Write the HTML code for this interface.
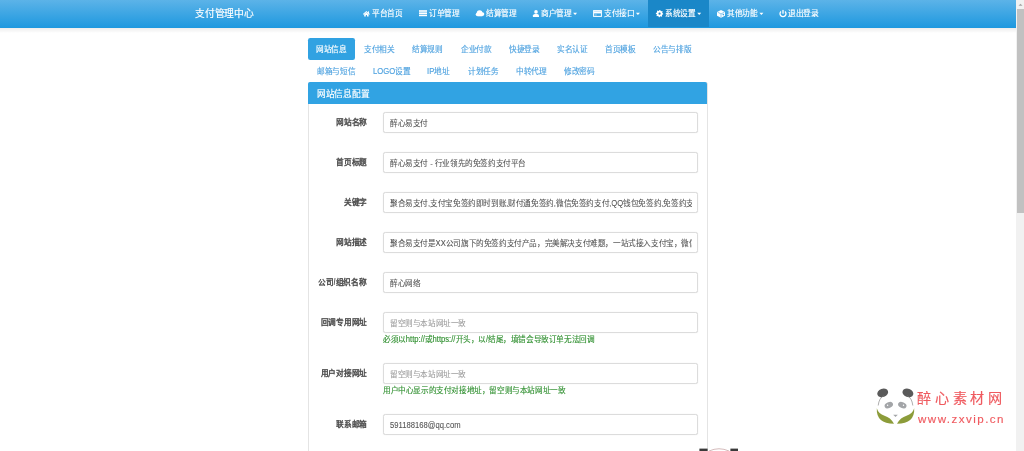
<!DOCTYPE html><html lang="zh-CN"><head><meta charset="utf-8"><style>
*{box-sizing:border-box;margin:0;padding:0}
html,body{width:1024px;height:451px;overflow:hidden;background:#fff;font-family:"Liberation Sans",sans-serif}
#wrap{position:absolute;left:0;top:0;width:1024px;height:451px;background:#fff;}
.L{display:inline-block;transform:scaleY(1.25);transform-origin:0 70%}
.t{position:absolute;white-space:nowrap;transform-origin:0 0;transform:scale(0.1);will-change:transform;-webkit-text-stroke:1.5px currentColor}
#nav{position:absolute;left:0;top:0;width:1016px;height:27.6px;background:linear-gradient(#5cb3e8,#1d98df)}
#navsh{position:absolute;left:0;top:27.6px;width:1016px;height:5px;background:linear-gradient(rgba(0,0,0,.075),rgba(0,0,0,0))}
#active{position:absolute;left:648px;top:0;width:61.3px;height:27.2px;background:#1a87c8}
#pact{position:absolute;left:308px;top:38px;width:47px;height:22px;background:#31a2e2;border-radius:2.2px}
#panel{position:absolute;left:308px;top:82.3px;width:400px;height:400px;border:1px solid #e4e4e4;border-radius:2px}
#ph{position:absolute;left:308px;top:82.3px;width:399.4px;height:21.4px;background:#31a3e3;border-radius:2px 2px 0 0}
.in{position:absolute;left:383px;width:315px;height:21px;border:1px solid #dcdcdc;border-radius:2.5px;background:#fff;box-shadow:0 0 1px rgba(0,0,0,.15)}
.clip{position:absolute;left:389px;width:302.6px;height:14px;overflow:hidden}
#sb{position:absolute;left:1015.5px;top:0;width:8.5px;height:451px;background:#f1f1f1}
#thumb{position:absolute;left:1016.8px;top:9.3px;width:7.2px;height:203.3px;background:#c1c1c1}
</style></head><body><div id="wrap">
<div id="nav"></div><div id="navsh"></div><div id="active"></div>
<div class="t" style="left:195px;top:6.5px;font-size:98.0px;line-height:130.0px;color:#fff;">支付管理中心</div>
<div class="t" style="left:372.3px;top:8px;font-size:77.0px;line-height:110.0px;color:#fff;">平台首页</div>
<div class="t" style="left:429.1px;top:8px;font-size:77.0px;line-height:110.0px;color:#fff;">订单管理</div>
<div class="t" style="left:486px;top:8px;font-size:77.0px;line-height:110.0px;color:#fff;">结算管理</div>
<div class="t" style="left:541px;top:8px;font-size:77.0px;line-height:110.0px;color:#fff;">商户管理</div>
<div class="t" style="left:603.5px;top:8px;font-size:77.0px;line-height:110.0px;color:#fff;">支付接口</div>
<div class="t" style="left:664.8px;top:8px;font-size:77.0px;line-height:110.0px;color:#fff;">系统设置</div>
<div class="t" style="left:727.3px;top:8px;font-size:77.0px;line-height:110.0px;color:#fff;">其他功能</div>
<div class="t" style="left:788.2px;top:8px;font-size:77.0px;line-height:110.0px;color:#fff;">退出登录</div>
<div id="pact"></div>
<div class="t" style="left:315.6px;top:43.5px;font-size:77.0px;line-height:110.0px;color:#fff;">网站信息</div>
<div class="t" style="left:364px;top:43.5px;font-size:77.0px;line-height:110.0px;color:#52a4e0;">支付相关</div>
<div class="t" style="left:411.7px;top:43.5px;font-size:77.0px;line-height:110.0px;color:#52a4e0;">结算规则</div>
<div class="t" style="left:460.6px;top:43.5px;font-size:77.0px;line-height:110.0px;color:#52a4e0;">企业付款</div>
<div class="t" style="left:508.75px;top:43.5px;font-size:77.0px;line-height:110.0px;color:#52a4e0;">快捷登录</div>
<div class="t" style="left:557px;top:43.5px;font-size:77.0px;line-height:110.0px;color:#52a4e0;">实名认证</div>
<div class="t" style="left:605.2px;top:43.5px;font-size:77.0px;line-height:110.0px;color:#52a4e0;">首页模板</div>
<div class="t" style="left:652.7px;top:43.5px;font-size:77.0px;line-height:110.0px;color:#52a4e0;">公告与排版</div>
<div class="t" style="left:317.2px;top:65.5px;font-size:77.0px;line-height:110.0px;color:#52a4e0;">邮箱与短信</div>
<div class="t" style="left:372.7px;top:65.5px;font-size:77.0px;line-height:110.0px;color:#52a4e0;"><span class="L">LOGO</span>设置</div>
<div class="t" style="left:427.3px;top:65.5px;font-size:77.0px;line-height:110.0px;color:#52a4e0;"><span class="L">IP</span>地址</div>
<div class="t" style="left:468.1px;top:65.5px;font-size:77.0px;line-height:110.0px;color:#52a4e0;">计划任务</div>
<div class="t" style="left:516.25px;top:65.5px;font-size:77.0px;line-height:110.0px;color:#52a4e0;">中转代理</div>
<div class="t" style="left:564.2px;top:65.5px;font-size:77.0px;line-height:110.0px;color:#52a4e0;">修改密码</div>
<div id="panel"></div><div id="ph"></div>
<div class="t" style="left:316.7px;top:88px;font-size:87.4px;line-height:120.0px;color:#fff;">网站信息配置</div>
<div class="t" style="right:657.3px;transform-origin:100% 0;top:117.3px;font-size:77.0px;line-height:110.0px;color:#505050;font-weight:bold;-webkit-text-stroke-width:0.6px;">网站名称</div>
<div class="in" style="top:112px"></div>
<div class="clip" style="top:116.2px"><div class="t" style="left:1px;top:1.5px;font-size:76.5px;line-height:110.0px;color:#555;-webkit-text-stroke-width:0.8px;">醉心易支付</div></div>
<div class="t" style="right:657.3px;transform-origin:100% 0;top:157.3px;font-size:77.0px;line-height:110.0px;color:#505050;font-weight:bold;-webkit-text-stroke-width:0.6px;">首页标题</div>
<div class="in" style="top:152px"></div>
<div class="clip" style="top:156.2px"><div class="t" style="left:1px;top:1.5px;font-size:76.5px;line-height:110.0px;color:#555;-webkit-text-stroke-width:0.8px;">醉心易支付 - 行业领先的免签约支付平台</div></div>
<div class="t" style="right:657.3px;transform-origin:100% 0;top:197.3px;font-size:77.0px;line-height:110.0px;color:#505050;font-weight:bold;-webkit-text-stroke-width:0.6px;">关键字</div>
<div class="in" style="top:192px"></div>
<div class="clip" style="top:196.2px"><div class="t" style="left:1px;top:1.5px;font-size:76.5px;line-height:110.0px;color:#555;-webkit-text-stroke-width:0.8px;">聚合易支付,支付宝免签约即时到账,财付通免签约,微信免签约支付,<span class="L">QQ</span>钱包免签约,免签约支付</div></div>
<div class="t" style="right:657.3px;transform-origin:100% 0;top:237.3px;font-size:77.0px;line-height:110.0px;color:#505050;font-weight:bold;-webkit-text-stroke-width:0.6px;">网站描述</div>
<div class="in" style="top:232px"></div>
<div class="clip" style="top:236.2px"><div class="t" style="left:1px;top:1.5px;font-size:76.5px;line-height:110.0px;color:#555;-webkit-text-stroke-width:0.8px;">聚合易支付是<span class="L">XX</span>公司旗下的免签约支付产品，完美解决支付难题，一站式接入支付宝，微信，财付通</div></div>
<div class="t" style="right:657.3px;transform-origin:100% 0;top:277.3px;font-size:77.0px;line-height:110.0px;color:#505050;font-weight:bold;-webkit-text-stroke-width:0.6px;">公司<span class="L">/</span>组织名称</div>
<div class="in" style="top:272px"></div>
<div class="clip" style="top:276.2px"><div class="t" style="left:1px;top:1.5px;font-size:76.5px;line-height:110.0px;color:#555;-webkit-text-stroke-width:0.8px;">醉心网络</div></div>
<div class="t" style="right:657.3px;transform-origin:100% 0;top:317.3px;font-size:77.0px;line-height:110.0px;color:#505050;font-weight:bold;-webkit-text-stroke-width:0.6px;">回调专用网址</div>
<div class="in" style="top:312px"></div>
<div class="clip" style="top:316.2px"><div class="t" style="left:1px;top:1.5px;font-size:76.5px;line-height:110.0px;color:#9a9a9a;-webkit-text-stroke-width:0.8px;">留空则与本站网址一致</div></div>
<div class="t" style="left:382.7px;top:334.2px;font-size:76.5px;line-height:110.0px;color:#369336;">必须以<span class="L">http://</span>或<span class="L">https://</span>开头，以<span class="L">/</span>结尾，填错会导致订单无法回调</div>
<div class="t" style="right:657.3px;transform-origin:100% 0;top:368.3px;font-size:77.0px;line-height:110.0px;color:#505050;font-weight:bold;-webkit-text-stroke-width:0.6px;">用户对接网址</div>
<div class="in" style="top:363px"></div>
<div class="clip" style="top:367.2px"><div class="t" style="left:1px;top:1.5px;font-size:76.5px;line-height:110.0px;color:#9a9a9a;-webkit-text-stroke-width:0.8px;">留空则与本站网址一致</div></div>
<div class="t" style="left:382.7px;top:385.2px;font-size:76.5px;line-height:110.0px;color:#369336;">用户中心显示的支付对接地址，留空则与本站网址一致</div>
<div class="t" style="right:657.3px;transform-origin:100% 0;top:419.3px;font-size:77.0px;line-height:110.0px;color:#505050;font-weight:bold;-webkit-text-stroke-width:0.6px;">联系邮箱</div>
<div class="in" style="top:414px"></div>
<div class="clip" style="top:418.2px"><div class="t" style="left:1px;top:1.5px;font-size:76.5px;line-height:110.0px;color:#555;-webkit-text-stroke-width:0.8px;"><span class="L">591188168@qq.com</span></div></div>
<svg style="position:absolute;left:0;top:0" width="1024" height="451" viewBox="0 0 1024 451">
<g fill="#fff">
<!-- home -->
<path d="M362.9 14.1 L366.4 10.9 L368.1 12.45 L368.1 11.2 L369.0 11.2 L369.0 13.3 L369.9 14.1 L369.2 14.7 L366.4 12.2 L363.6 14.7 Z"/>
<path d="M364.2 14.3 L366.4 12.4 L368.6 14.3 L368.6 16.6 L367.0 16.6 L367.0 15.1 L365.8 15.1 L365.8 16.6 L364.2 16.6 Z"/>
<!-- list -->
<rect x="419" y="10.2" width="8" height="1.6"/><rect x="419" y="12.4" width="8" height="1.6"/><rect x="419" y="14.6" width="8" height="1.6"/>
<!-- cloud -->
<circle cx="479.6" cy="13.1" r="2.9"/><circle cx="482.4" cy="14.1" r="1.9"/><circle cx="477.4" cy="14.4" r="1.7"/><rect x="477.4" y="14.2" width="5" height="2.1"/>
<!-- user -->
<circle cx="536" cy="11.9" r="1.8"/><path d="M532.9 17 L532.9 15.6 Q533.2 14.1 534.8 13.9 L537.2 13.9 Q538.8 14.1 539.0 15.6 L539.0 17 Z"/>
<!-- carets -->
<path d="M573.1 12.8 L577.1 12.8 L575.1 15.0 Z"/><path d="M635.9 12.8 L639.9 12.8 L637.9 15.0 Z"/><path d="M697.2 12.8 L701.2 12.8 L699.2 15.0 Z"/><path d="M759.4 12.8 L763.4 12.8 L761.4 15.0 Z"/>
<!-- gear -->
<path fill-rule="evenodd" d="M659.55 9.95 L660.27 10.02 L660.66 10.97 L661.16 11.24 L662.17 11.03 L662.63 11.59 L662.23 12.54 L662.39 13.08 L663.25 13.65 L663.18 14.37 L662.23 14.76 L661.96 15.26 L662.17 16.27 L661.61 16.73 L660.66 16.33 L660.12 16.49 L659.55 17.35 L658.83 17.28 L658.44 16.33 L657.94 16.06 L656.93 16.27 L656.47 15.71 L656.87 14.76 L656.71 14.22 L655.85 13.65 L655.92 12.93 L656.87 12.54 L657.14 12.04 L656.93 11.03 L657.49 10.57 L658.44 10.97 L658.98 10.81 Z M660.65 13.65 A1.1 1.1 0 1 0 658.45 13.65 A1.1 1.1 0 1 0 660.65 13.65 Z"/>
<!-- cube -->
<path d="M721 10.1 L725 12.0 L725 15.8 L721 17.7 L717 15.8 L717 12.0 Z"/>
<!-- power -->
<rect x="782.35" y="9.9" width="1.3" height="3.8"/>
</g>
<g fill="none" stroke="#fff">
<rect x="593.6" y="10.6" width="7.8" height="5.8" stroke-width="1.0"/>
<path d="M781.0 11.4 A3.0 3.0 0 1 0 785.0 11.4" stroke-width="1.3"/>
</g>
<rect x="594" y="11.3" width="7" height="2.1" fill="#fff"/><rect x="594.6" y="14.6" width="2.2" height="0.7" fill="#fff" opacity=".7"/>
<g fill="none" stroke="#3aa3e3" stroke-width="0.55"><path d="M717.6 12.2 L721 13.9 L724.4 12.2 M721 13.9 L721 17.2"/></g><circle cx="723.3" cy="14.6" r="0.8" fill="#3aa3e3"/>
</svg>
<svg style="position:absolute;left:0;top:0" width="1024" height="451" viewBox="0 0 1024 451">
<ellipse cx="882.7" cy="392.9" rx="5.6" ry="4.2" transform="rotate(-20 882.7 392.9)" fill="#5a5a5a"/>
<ellipse cx="907.9" cy="392.9" rx="5.6" ry="4.2" transform="rotate(20 907.9 392.9)" fill="#5a5a5a"/>
<path d="M878.2 405.5 Q879 398 884 395.5" fill="none" stroke="#777" stroke-width="0.6"/>
<path d="M912.8 405.5 Q912 398 907 395.5" fill="none" stroke="#777" stroke-width="0.6"/>
<ellipse cx="888.8" cy="405.2" rx="4.4" ry="2.9" transform="rotate(-25 888.8 405.2)" fill="#a3a5a8"/>
<ellipse cx="902.3" cy="405.2" rx="4.4" ry="2.9" transform="rotate(25 902.3 405.2)" fill="#a3a5a8"/>
<circle cx="887.6" cy="405.2" r="0.7" fill="#fff"/><circle cx="903.5" cy="405.2" r="0.7" fill="#fff"/>
<path d="M893.2 414.8 L897.8 414.8 L895.5 417.0 Z" fill="#a3a5a8"/>
<path d="M876.8 408.2 Q876 423.5 894 423.8 Q890.5 417.5 884.5 415.8 Q878.5 413.8 876.8 408.2 Z" fill="#8c9c3a"/>
<path d="M914.2 408.2 Q915 423.5 897 423.8 Q900.5 417.5 906.5 415.8 Q912.5 413.8 914.2 408.2 Z" fill="#8c9c3a"/>
<rect x="699.4" y="448.6" width="8.2" height="3" fill="#3a3a3a"/><rect x="730.4" y="448.6" width="7.6" height="3" fill="#3a3a3a"/>
<path d="M709 451 Q719 446.5 729 451" fill="none" stroke="#c9a9a9" stroke-width="0.8"/>
</svg>
<div class="t" style="left:917px;top:388.5px;font-size:142.0px;line-height:180.0px;color:#ef5a5f;letter-spacing:35.5px;">醉心素材网</div>
<div class="t" style="left:918.2px;top:410.5px;font-size:116.0px;line-height:150.0px;color:#ef5a5f;letter-spacing:14.5px;">www.zxvip.cn</div>
<div id="sb"></div><div id="thumb"></div><svg style="position:absolute;left:1015px;top:0" width="9" height="9" viewBox="1015 0 9 9"><path d="M1018.5 5.8 L1022.5 5.8 L1020.5 3.8 Z" fill="#a3a3a3"/></svg>
</div></body></html>
